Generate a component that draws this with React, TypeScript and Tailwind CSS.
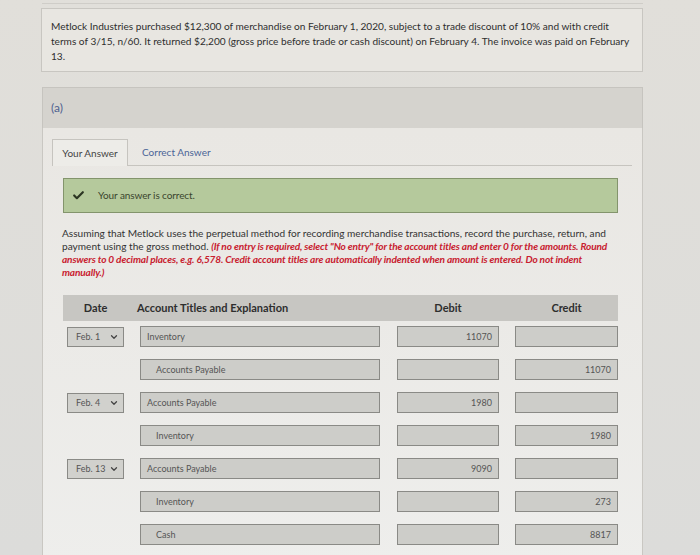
import { Check, ChevronDown } from "lucide-react";

type Row = { date: string; account: string; debit: string; credit: string; indent: boolean };

const rows: Row[] = [
  { date: "Feb. 1", account: "Inventory", debit: "11070", credit: "", indent: false },
  { date: "", account: "Accounts Payable", debit: "", credit: "11070", indent: true },
  { date: "Feb. 4", account: "Accounts Payable", debit: "1980", credit: "", indent: false },
  { date: "", account: "Inventory", debit: "", credit: "1980", indent: true },
  { date: "Feb. 13", account: "Accounts Payable", debit: "9090", credit: "", indent: false },
  { date: "", account: "Inventory", debit: "", credit: "273", indent: true },
  { date: "", account: "Cash", debit: "", credit: "8817", indent: true },
];

function Field({ value, right, indent, w }: { value: string; right?: boolean; indent?: boolean; w: string }) {
  return (
    <div
      className={`${w} h-[21px] bg-[#cdcdc9] border border-[#8a8a86] flex items-center text-[9px] text-[#555] ${
        right ? "justify-end pr-[6px]" : indent ? "pl-[15px]" : "pl-[6px]"
      }`}
    >
      {value}
    </div>
  );
}

export default function App() {
  return (
    <div className="w-[700px] h-[555px] overflow-hidden bg-linear-to-b from-[#e1dfda] to-[#dcdcda] font-['Lato','Noto_Sans',sans-serif] text-[#2e2e2e]">
      <div className="ml-[42px] w-[601px] h-[4px] border-b border-[#cfcdc8]" />
      {/* Problem box */}
      <div className="ml-[41px] mt-[4px] w-[602px] h-[64px] border border-[#c8c6c1] bg-[#e8e6e1] pt-[10px] pl-[9px] text-[10.1px] leading-[15px] text-[#2e2e2e] whitespace-nowrap">
        Metlock Industries purchased $12,300 of merchandise on February 1, 2020, subject to a trade discount of 10% and with credit
        <br />
        terms of 3/15, n/60. It returned $2,200 (gross price before trade or cash discount) on February 4. The invoice was paid on February
        <br />
        13.
      </div>

      {/* Section (a) header */}
      <div className="ml-[42px] mt-[15px] w-[601px] h-[41px] bg-[#d5d3ce] border border-b-0 border-[#c6c4bf] flex items-center pl-[8px]">
        <span className="text-[12px] text-[#4f6290]">(a)</span>
      </div>

      {/* Panel */}
      <div className="ml-[42px] w-[601px] h-[440px] bg-linear-to-b from-[#e9e7e3] to-[#eeeeec] border-x border-[#c9c7c2] pt-[11px]">
        {/* Tabs */}
        <div className="ml-[9px] w-[580px] h-[27px] flex items-stretch border-b border-[#c6c4bf]">
          <div className="w-[76px] border border-b-0 border-[#c6c4bf] bg-[#edece8] -mb-px flex items-center justify-center text-[10px] text-[#444]">
            Your Answer
          </div>
          <div className="ml-[14px] flex items-center text-[10px] text-[#4b6597]">Correct Answer</div>
        </div>

        {/* Green box */}
        <div className="ml-[20px] mt-[12px] w-[555px] h-[35px] bg-[#b5c99c] border border-[#83946c] flex items-center pl-[8px]">
          <Check size={13} strokeWidth={4} className="text-[#2b3522]" />
          <span className="ml-[13px] text-[10px] text-[#3a452d] tracking-[-0.1px]">Your answer is correct.</span>
        </div>

        {/* Instructions */}
        <div className="ml-[19px] mt-[14px] text-[10.1px] leading-[13px] text-[#333] whitespace-nowrap">
          Assuming that Metlock uses the perpetual method for recording merchandise transactions, record the purchase, return, and
          <br />
          payment using the gross method.{" "}
          <span className="font-bold italic text-[#c8202f] tracking-[-0.15px]">
            (If no entry is required, select "No entry" for the account titles and enter 0 for the amounts. Round
            <br />
            answers to 0 decimal places, e.g. 6,578. Credit account titles are automatically indented when amount is entered. Do not indent
            <br />
            manually.)
          </span>
        </div>

        {/* Table */}
        <div className="ml-[20px] mt-[16px] w-[555px]">
          <div className="h-[26px] bg-[#c7c6c2] flex items-center pl-[4px] text-[11px] font-bold text-[#2e2e2e]">
            <div className="w-[57px] text-center">Date</div>
            <div className="ml-[13px] w-[243px]">Account Titles and Explanation</div>
            <div className="ml-[17px] w-[102px] text-center">Debit</div>
            <div className="ml-[16px] w-[103px] text-center">Credit</div>
          </div>
          <div className="mt-[5px] flex flex-col gap-[12px]">
            {rows.map((r, i) => (
              <div key={i} className="flex items-center pl-[4px]">
                {r.date ? (
                  <div className="w-[57px] h-[20px] bg-[#d1d1cd] border border-[#8a8a86] flex items-center justify-between pl-[8px] pr-[4px] text-[9px] text-[#555]">
                    <span>{r.date}</span>
                    <ChevronDown size={10} strokeWidth={3} className="text-[#444]" />
                  </div>
                ) : (
                  <div className="w-[57px]" />
                )}
                <div className="ml-[16px]">
                  <Field value={r.account} indent={r.indent} w="w-[240px]" />
                </div>
                <div className="ml-[17px]">
                  <Field value={r.debit} right w="w-[102px]" />
                </div>
                <div className="ml-[16px]">
                  <Field value={r.credit} right w="w-[103px]" />
                </div>
              </div>
            ))}
          </div>
        </div>
      </div>
    </div>
  );
}
